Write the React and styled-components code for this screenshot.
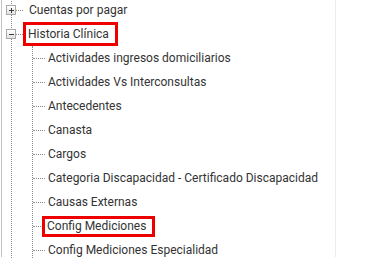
import React from 'react'
import styled, { createGlobalStyle } from 'styled-components'

const GlobalStyle = createGlobalStyle`
  html, body {
    margin: 0;
    padding: 0;
    background: #fff;
  }
  body {
    font-family: Roboto, 'Liberation Sans', sans-serif;
    font-size: 12px;
    color: #333;
    overflow: hidden;
  }
`

const Page = styled.div`
  height: 259px;
  padding-left: 1px;
  overflow: hidden;
`

const Panel = styled.div`
  box-sizing: border-box;
  width: 335px;
  height: 100%;
  border-left: 1px solid #c4c4c4;
  border-right: 1px solid #ececec;
`

const Branch = styled.div`
  margin-top: ${(p) => p.$top || 0}px;
  margin-left: ${(p) => p.$indent}px;
  border-left: 1px dotted #8a8a8a;
`

const Row = styled.div`
  display: flex;
  align-items: center;
  height: 24px;
`

const Toggle = styled.span`
  box-sizing: border-box;
  flex-shrink: 0;
  display: flex;
  align-items: center;
  justify-content: center;
  width: 10px;
  height: 10px;
  margin-left: -6px;
  border: 1px solid #a9a9a9;
  background: linear-gradient(#ffffff, #e2e2e2);
`

const Connector = styled.span`
  flex-shrink: 0;
  width: ${(p) => p.$width}px;
  border-top: 1px dotted #8a8a8a;
`

const Label = styled.span`
  box-sizing: border-box;
  display: flex;
  align-items: center;
  height: ${(p) => p.$height}px;
  margin-left: ${(p) => p.$shift || 0}px;
  padding: 0 ${(p) => (p.$active ? 6 : 4)}px 0 ${(p) => (p.$active ? 2 : 3)}px;
  border: 3px solid ${(p) => (p.$active ? '#ee0000' : 'transparent')};
  white-space: nowrap;
`

const Sign = ({ open }) => (
  <svg width='7' height='7' viewBox='0 0 7 7'>
    <rect x='1' y='3' width='5' height='1' fill='#3a3a3a' />
    {!open && <rect x='3' y='1' width='1' height='5' fill='#3a3a3a' />}
  </svg>
)

const children = [
  'Actividades ingresos domiciliarios',
  'Actividades Vs Interconsultas',
  'Antecedentes',
  'Canasta',
  'Cargos',
  'Categoria Discapacidad - Certificado Discapacidad',
  'Causas Externas',
  'Config Mediciones',
  'Config Mediciones Especialidad'
]

const ParentRow = ({ label, open, active }) => (
  <Row>
    <Toggle>
      <Sign open={open} />
    </Toggle>
    <Connector $width={7} />
    <Label $height={24} $active={active}>
      {label}
    </Label>
  </Row>
)

export default function App () {
  return (
    <Page>
      <GlobalStyle />
      <Panel>
        <Branch $indent={9} $top={-2}>
          <ParentRow label='Cuentas por pagar' />
          <ParentRow label='Historia Clínica' open active />
          <Branch $indent={20}>
            {children.map((name) => (
              <Row key={name}>
                <Connector $width={12} />
                <Label $height={21} $shift={-3} $active={name === 'Config Mediciones'}>
                  {name}
                </Label>
              </Row>
            ))}
          </Branch>
        </Branch>
      </Panel>
    </Page>
  )
}
